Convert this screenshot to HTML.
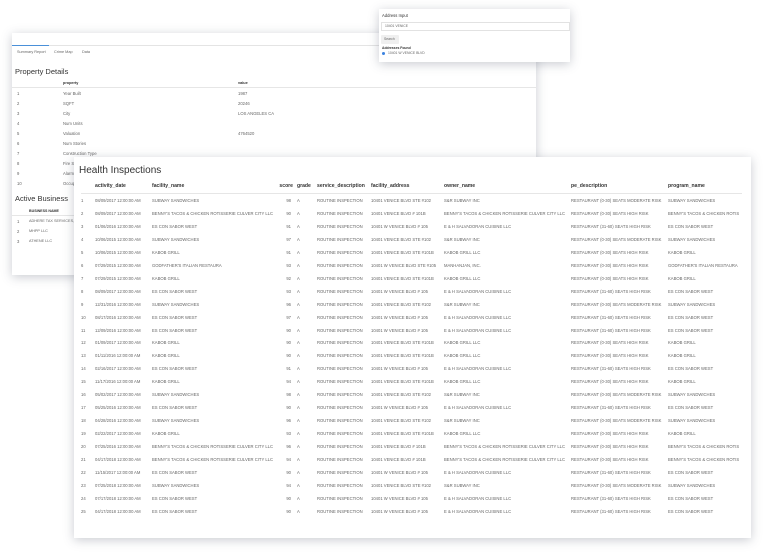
<!DOCTYPE html>
<html><head><meta charset="utf-8"><style>
body{margin:0;width:768px;height:557px;background:#fff;font-family:"Liberation Sans",sans-serif;position:relative;overflow:hidden;color:#444}
.card{position:absolute;background:#fff;box-shadow:0 2px 10px rgba(60,70,90,.28)}
.t{position:absolute;white-space:nowrap;font-size:4.2px;color:#666}
.b{font-weight:bold;color:#333}
table{border-collapse:collapse;table-layout:fixed;position:absolute}
td{font-size:4.2px;white-space:nowrap;overflow:hidden;height:12.96px;padding:0 2px 0 0;color:#666;vertical-align:middle}
th{font-size:5.1px;text-align:left;color:#333;padding:0;height:14px;border-bottom:1.5px solid #e6e6e6}
.r{text-align:right;padding-right:6px}
</style></head><body>

<div class="card" style="left:12px;top:33px;width:524px;height:242px">
  <div style="position:absolute;left:0;top:12px;width:524px;border-top:1px solid #e4e4e4"></div>
  <div style="position:absolute;left:0;top:12px;width:37px;border-top:1.5px solid #4a90d9"></div>
  <div class="t" style="left:5px;top:17px;font-size:3.8px">Summary Report</div>
  <div class="t" style="left:42px;top:17px;font-size:3.8px">Crime Map</div>
  <div class="t" style="left:70px;top:17px;font-size:3.8px">Data</div>
  <div class="t" style="left:3px;top:34px;font-size:7.5px;color:#333">Property Details</div>
  <div class="t b" style="left:51px;top:48px;font-size:3.8px">property</div>
  <div class="t b" style="left:226px;top:48px;font-size:3.8px">value</div>
  <div style="position:absolute;left:0;top:54px;width:524px;border-top:1px solid #e6e6e6"></div>
  <div class="t" style="left:5px;top:58px">1</div><div class="t" style="left:51px;top:58px">Year Built</div><div class="t" style="left:226px;top:58px">1987</div>
  <div class="t" style="left:5px;top:68px">2</div><div class="t" style="left:51px;top:68px">SQFT</div><div class="t" style="left:226px;top:68px">20246</div>
  <div class="t" style="left:5px;top:78px">3</div><div class="t" style="left:51px;top:78px">City</div><div class="t" style="left:226px;top:78px">LOS ANGELES CA</div>
  <div class="t" style="left:5px;top:88px">4</div><div class="t" style="left:51px;top:88px">Num Units</div>
  <div class="t" style="left:5px;top:98px">5</div><div class="t" style="left:51px;top:98px">Valuation</div><div class="t" style="left:226px;top:98px">4764520</div>
  <div class="t" style="left:5px;top:108px">6</div><div class="t" style="left:51px;top:108px">Num Stories</div>
  <div class="t" style="left:5px;top:118px">7</div><div class="t" style="left:51px;top:118px">Construction Type</div>
  <div class="t" style="left:5px;top:128px">8</div><div class="t" style="left:51px;top:128px">Fire Sp</div>
  <div class="t" style="left:5px;top:138px">9</div><div class="t" style="left:51px;top:138px">Alarm</div>
  <div class="t" style="left:5px;top:148px">10</div><div class="t" style="left:51px;top:148px">Occup</div>
  <div class="t" style="left:3px;top:161px;font-size:7.5px;color:#333">Active Business</div>
  <div class="t b" style="left:17px;top:176px;font-size:3.6px">BUSINESS NAME</div>
  <div style="position:absolute;left:0;top:182px;width:70px;border-top:1px solid #e6e6e6"></div>
  <div class="t" style="left:5px;top:186px">1</div><div class="t" style="left:17px;top:186px;font-size:3.8px">ADHERE TAX SERVICES, LL</div>
  <div class="t" style="left:5px;top:196px">2</div><div class="t" style="left:17px;top:196px;font-size:3.8px">MHPP LLC</div>
  <div class="t" style="left:5px;top:206px">3</div><div class="t" style="left:17px;top:206px;font-size:3.8px">ATHENE LLC</div>
</div>

<div class="card" style="left:379px;top:9px;width:191px;height:53px">
  <div class="t" style="left:3px;top:4px;font-size:4.2px;color:#333">Address Input</div>
  <div style="position:absolute;left:2px;top:13px;width:189px;height:9px;border:1px solid #e2e2e2;box-sizing:border-box"></div>
  <div class="t" style="left:6px;top:15px;font-size:3.4px">10401 VENICE</div>
  <div style="position:absolute;left:2px;top:26px;width:18px;height:9px;background:#efefef;border-radius:1px"></div>
  <div class="t" style="left:5px;top:28px;font-size:3.4px">Search</div>
  <div class="t b" style="left:3px;top:37px;font-size:3.4px">Addresses Found</div>
  <div style="position:absolute;left:3px;top:43px;width:3px;height:3px;border-radius:50%;background:#3b82e0"></div>
  <div class="t" style="left:9px;top:42px;font-size:3.4px">10401 W VENICE BLVD</div>
</div>

<div class="card" style="left:74px;top:157px;width:677px;height:381px">
  <div class="t" style="left:5px;top:8px;font-size:10px;color:#333">Health Inspections</div>
  <table style="left:7px;top:22px;width:661px">
    <colgroup><col style="width:14px"><col style="width:57px"><col style="width:123px"><col style="width:22px"><col style="width:20px"><col style="width:54px"><col style="width:73px"><col style="width:127px"><col style="width:97px"><col style="width:74px"></colgroup>
    <tr><th></th><th>activity_date</th><th>facility_name</th><th class="r" style="padding-right:4px">score</th><th>grade</th><th>service_description</th><th>facility_address</th><th>owner_name</th><th>pe_description</th><th>program_name</th></tr>
<tr><td>1</td><td>08/09/2017 12:00:00 AM</td><td>SUBWAY SANDWICHES</td><td class="r">98</td><td>A</td><td>ROUTINE INSPECTION</td><td>10401 VENICE BLVD STE #102</td><td>S&amp;R SUBWAY INC</td><td>RESTAURANT (0-30) SEATS MODERATE RISK</td><td>SUBWAY SANDWICHES</td></tr>
<tr><td>2</td><td>08/09/2017 12:00:00 AM</td><td>BENNY'S TACOS &amp; CHICKEN ROTISSERIE CULVER CITY LLC</td><td class="r">90</td><td>A</td><td>ROUTINE INSPECTION</td><td>10401 VENICE BLVD # 101B</td><td>BENNY'S TACOS &amp; CHICKEN ROTISSERIE CULVER CITY LLC</td><td>RESTAURANT (0-30) SEATS HIGH RISK</td><td>BENNY'S TACOS &amp; CHICKEN ROTIS</td></tr>
<tr><td>3</td><td>01/06/2016 12:00:00 AM</td><td>ES CON SABOR WEST</td><td class="r">91</td><td>A</td><td>ROUTINE INSPECTION</td><td>10401 W VENICE BLVD # 105</td><td>E &amp; H SALVADORAN CUISINE LLC</td><td>RESTAURANT (31-60) SEATS HIGH RISK</td><td>ES CON SABOR WEST</td></tr>
<tr><td>4</td><td>10/06/2015 12:00:00 AM</td><td>SUBWAY SANDWICHES</td><td class="r">97</td><td>A</td><td>ROUTINE INSPECTION</td><td>10401 VENICE BLVD STE #102</td><td>S&amp;R SUBWAY INC</td><td>RESTAURANT (0-30) SEATS MODERATE RISK</td><td>SUBWAY SANDWICHES</td></tr>
<tr><td>5</td><td>10/06/2015 12:00:00 AM</td><td>KABOB GRILL</td><td class="r">91</td><td>A</td><td>ROUTINE INSPECTION</td><td>10401 VENICE BLVD STE #101B</td><td>KABOB GRILL LLC</td><td>RESTAURANT (0-30) SEATS HIGH RISK</td><td>KABOB GRILL</td></tr>
<tr><td>6</td><td>07/29/2015 12:00:00 AM</td><td>GODFATHER'S ITALIAN RESTAURA</td><td class="r">93</td><td>A</td><td>ROUTINE INSPECTION</td><td>10401 W VENICE BLVD STE #105</td><td>MANHANJAN, INC.</td><td>RESTAURANT (0-30) SEATS HIGH RISK</td><td>GODFATHER'S ITALIAN RESTAURA</td></tr>
<tr><td>7</td><td>07/29/2015 12:00:00 AM</td><td>KABOB GRILL</td><td class="r">92</td><td>A</td><td>ROUTINE INSPECTION</td><td>10401 VENICE BLVD STE #101B</td><td>KABOB GRILL LLC</td><td>RESTAURANT (0-30) SEATS HIGH RISK</td><td>KABOB GRILL</td></tr>
<tr><td>8</td><td>08/09/2017 12:00:00 AM</td><td>ES CON SABOR WEST</td><td class="r">93</td><td>A</td><td>ROUTINE INSPECTION</td><td>10401 W VENICE BLVD # 105</td><td>E &amp; H SALVADORAN CUISINE LLC</td><td>RESTAURANT (31-60) SEATS HIGH RISK</td><td>ES CON SABOR WEST</td></tr>
<tr><td>9</td><td>12/31/2016 12:00:00 AM</td><td>SUBWAY SANDWICHES</td><td class="r">96</td><td>A</td><td>ROUTINE INSPECTION</td><td>10401 VENICE BLVD STE #102</td><td>S&amp;R SUBWAY INC</td><td>RESTAURANT (0-30) SEATS MODERATE RISK</td><td>SUBWAY SANDWICHES</td></tr>
<tr><td>10</td><td>08/17/2016 12:00:00 AM</td><td>ES CON SABOR WEST</td><td class="r">97</td><td>A</td><td>ROUTINE INSPECTION</td><td>10401 W VENICE BLVD # 105</td><td>E &amp; H SALVADORAN CUISINE LLC</td><td>RESTAURANT (31-60) SEATS HIGH RISK</td><td>ES CON SABOR WEST</td></tr>
<tr><td>11</td><td>12/09/2016 12:00:00 AM</td><td>ES CON SABOR WEST</td><td class="r">90</td><td>A</td><td>ROUTINE INSPECTION</td><td>10401 W VENICE BLVD # 105</td><td>E &amp; H SALVADORAN CUISINE LLC</td><td>RESTAURANT (31-60) SEATS HIGH RISK</td><td>ES CON SABOR WEST</td></tr>
<tr><td>12</td><td>01/09/2017 12:00:00 AM</td><td>KABOB GRILL</td><td class="r">90</td><td>A</td><td>ROUTINE INSPECTION</td><td>10401 VENICE BLVD STE #101B</td><td>KABOB GRILL LLC</td><td>RESTAURANT (0-30) SEATS HIGH RISK</td><td>KABOB GRILL</td></tr>
<tr><td>13</td><td>01/11/2016 12:00:00 AM</td><td>KABOB GRILL</td><td class="r">90</td><td>A</td><td>ROUTINE INSPECTION</td><td>10401 VENICE BLVD STE #101B</td><td>KABOB GRILL LLC</td><td>RESTAURANT (0-30) SEATS HIGH RISK</td><td>KABOB GRILL</td></tr>
<tr><td>14</td><td>02/16/2017 12:00:00 AM</td><td>ES CON SABOR WEST</td><td class="r">91</td><td>A</td><td>ROUTINE INSPECTION</td><td>10401 W VENICE BLVD # 105</td><td>E &amp; H SALVADORAN CUISINE LLC</td><td>RESTAURANT (31-60) SEATS HIGH RISK</td><td>ES CON SABOR WEST</td></tr>
<tr><td>15</td><td>11/17/2016 12:00:00 AM</td><td>KABOB GRILL</td><td class="r">94</td><td>A</td><td>ROUTINE INSPECTION</td><td>10401 VENICE BLVD STE #101B</td><td>KABOB GRILL LLC</td><td>RESTAURANT (0-30) SEATS HIGH RISK</td><td>KABOB GRILL</td></tr>
<tr><td>16</td><td>05/02/2017 12:00:00 AM</td><td>SUBWAY SANDWICHES</td><td class="r">98</td><td>A</td><td>ROUTINE INSPECTION</td><td>10401 VENICE BLVD STE #102</td><td>S&amp;R SUBWAY INC</td><td>RESTAURANT (0-30) SEATS MODERATE RISK</td><td>SUBWAY SANDWICHES</td></tr>
<tr><td>17</td><td>05/25/2016 12:00:00 AM</td><td>ES CON SABOR WEST</td><td class="r">90</td><td>A</td><td>ROUTINE INSPECTION</td><td>10401 W VENICE BLVD # 105</td><td>E &amp; H SALVADORAN CUISINE LLC</td><td>RESTAURANT (31-60) SEATS HIGH RISK</td><td>ES CON SABOR WEST</td></tr>
<tr><td>18</td><td>04/28/2016 12:00:00 AM</td><td>SUBWAY SANDWICHES</td><td class="r">96</td><td>A</td><td>ROUTINE INSPECTION</td><td>10401 VENICE BLVD STE #102</td><td>S&amp;R SUBWAY INC</td><td>RESTAURANT (0-30) SEATS MODERATE RISK</td><td>SUBWAY SANDWICHES</td></tr>
<tr><td>19</td><td>02/22/2017 12:00:00 AM</td><td>KABOB GRILL</td><td class="r">93</td><td>A</td><td>ROUTINE INSPECTION</td><td>10401 VENICE BLVD STE #101B</td><td>KABOB GRILL LLC</td><td>RESTAURANT (0-30) SEATS HIGH RISK</td><td>KABOB GRILL</td></tr>
<tr><td>20</td><td>07/25/2016 12:00:00 AM</td><td>BENNY'S TACOS &amp; CHICKEN ROTISSERIE CULVER CITY LLC</td><td class="r">96</td><td>A</td><td>ROUTINE INSPECTION</td><td>10401 VENICE BLVD # 101B</td><td>BENNY'S TACOS &amp; CHICKEN ROTISSERIE CULVER CITY LLC</td><td>RESTAURANT (0-30) SEATS HIGH RISK</td><td>BENNY'S TACOS &amp; CHICKEN ROTIS</td></tr>
<tr><td>21</td><td>04/17/2018 12:00:00 AM</td><td>BENNY'S TACOS &amp; CHICKEN ROTISSERIE CULVER CITY LLC</td><td class="r">94</td><td>A</td><td>ROUTINE INSPECTION</td><td>10401 VENICE BLVD # 101B</td><td>BENNY'S TACOS &amp; CHICKEN ROTISSERIE CULVER CITY LLC</td><td>RESTAURANT (0-30) SEATS HIGH RISK</td><td>BENNY'S TACOS &amp; CHICKEN ROTIS</td></tr>
<tr><td>22</td><td>11/15/2017 12:00:00 AM</td><td>ES CON SABOR WEST</td><td class="r">90</td><td>A</td><td>ROUTINE INSPECTION</td><td>10401 W VENICE BLVD # 105</td><td>E &amp; H SALVADORAN CUISINE LLC</td><td>RESTAURANT (31-60) SEATS HIGH RISK</td><td>ES CON SABOR WEST</td></tr>
<tr><td>23</td><td>07/25/2018 12:00:00 AM</td><td>SUBWAY SANDWICHES</td><td class="r">94</td><td>A</td><td>ROUTINE INSPECTION</td><td>10401 VENICE BLVD STE #102</td><td>S&amp;R SUBWAY INC</td><td>RESTAURANT (0-30) SEATS MODERATE RISK</td><td>SUBWAY SANDWICHES</td></tr>
<tr><td>24</td><td>07/17/2018 12:00:00 AM</td><td>ES CON SABOR WEST</td><td class="r">90</td><td>A</td><td>ROUTINE INSPECTION</td><td>10401 W VENICE BLVD # 105</td><td>E &amp; H SALVADORAN CUISINE LLC</td><td>RESTAURANT (31-60) SEATS HIGH RISK</td><td>ES CON SABOR WEST</td></tr>
<tr><td>25</td><td>04/17/2018 12:00:00 AM</td><td>ES CON SABOR WEST</td><td class="r">90</td><td>A</td><td>ROUTINE INSPECTION</td><td>10401 W VENICE BLVD # 105</td><td>E &amp; H SALVADORAN CUISINE LLC</td><td>RESTAURANT (31-60) SEATS HIGH RISK</td><td>ES CON SABOR WEST</td></tr>
  </table>
</div>
</body></html>
